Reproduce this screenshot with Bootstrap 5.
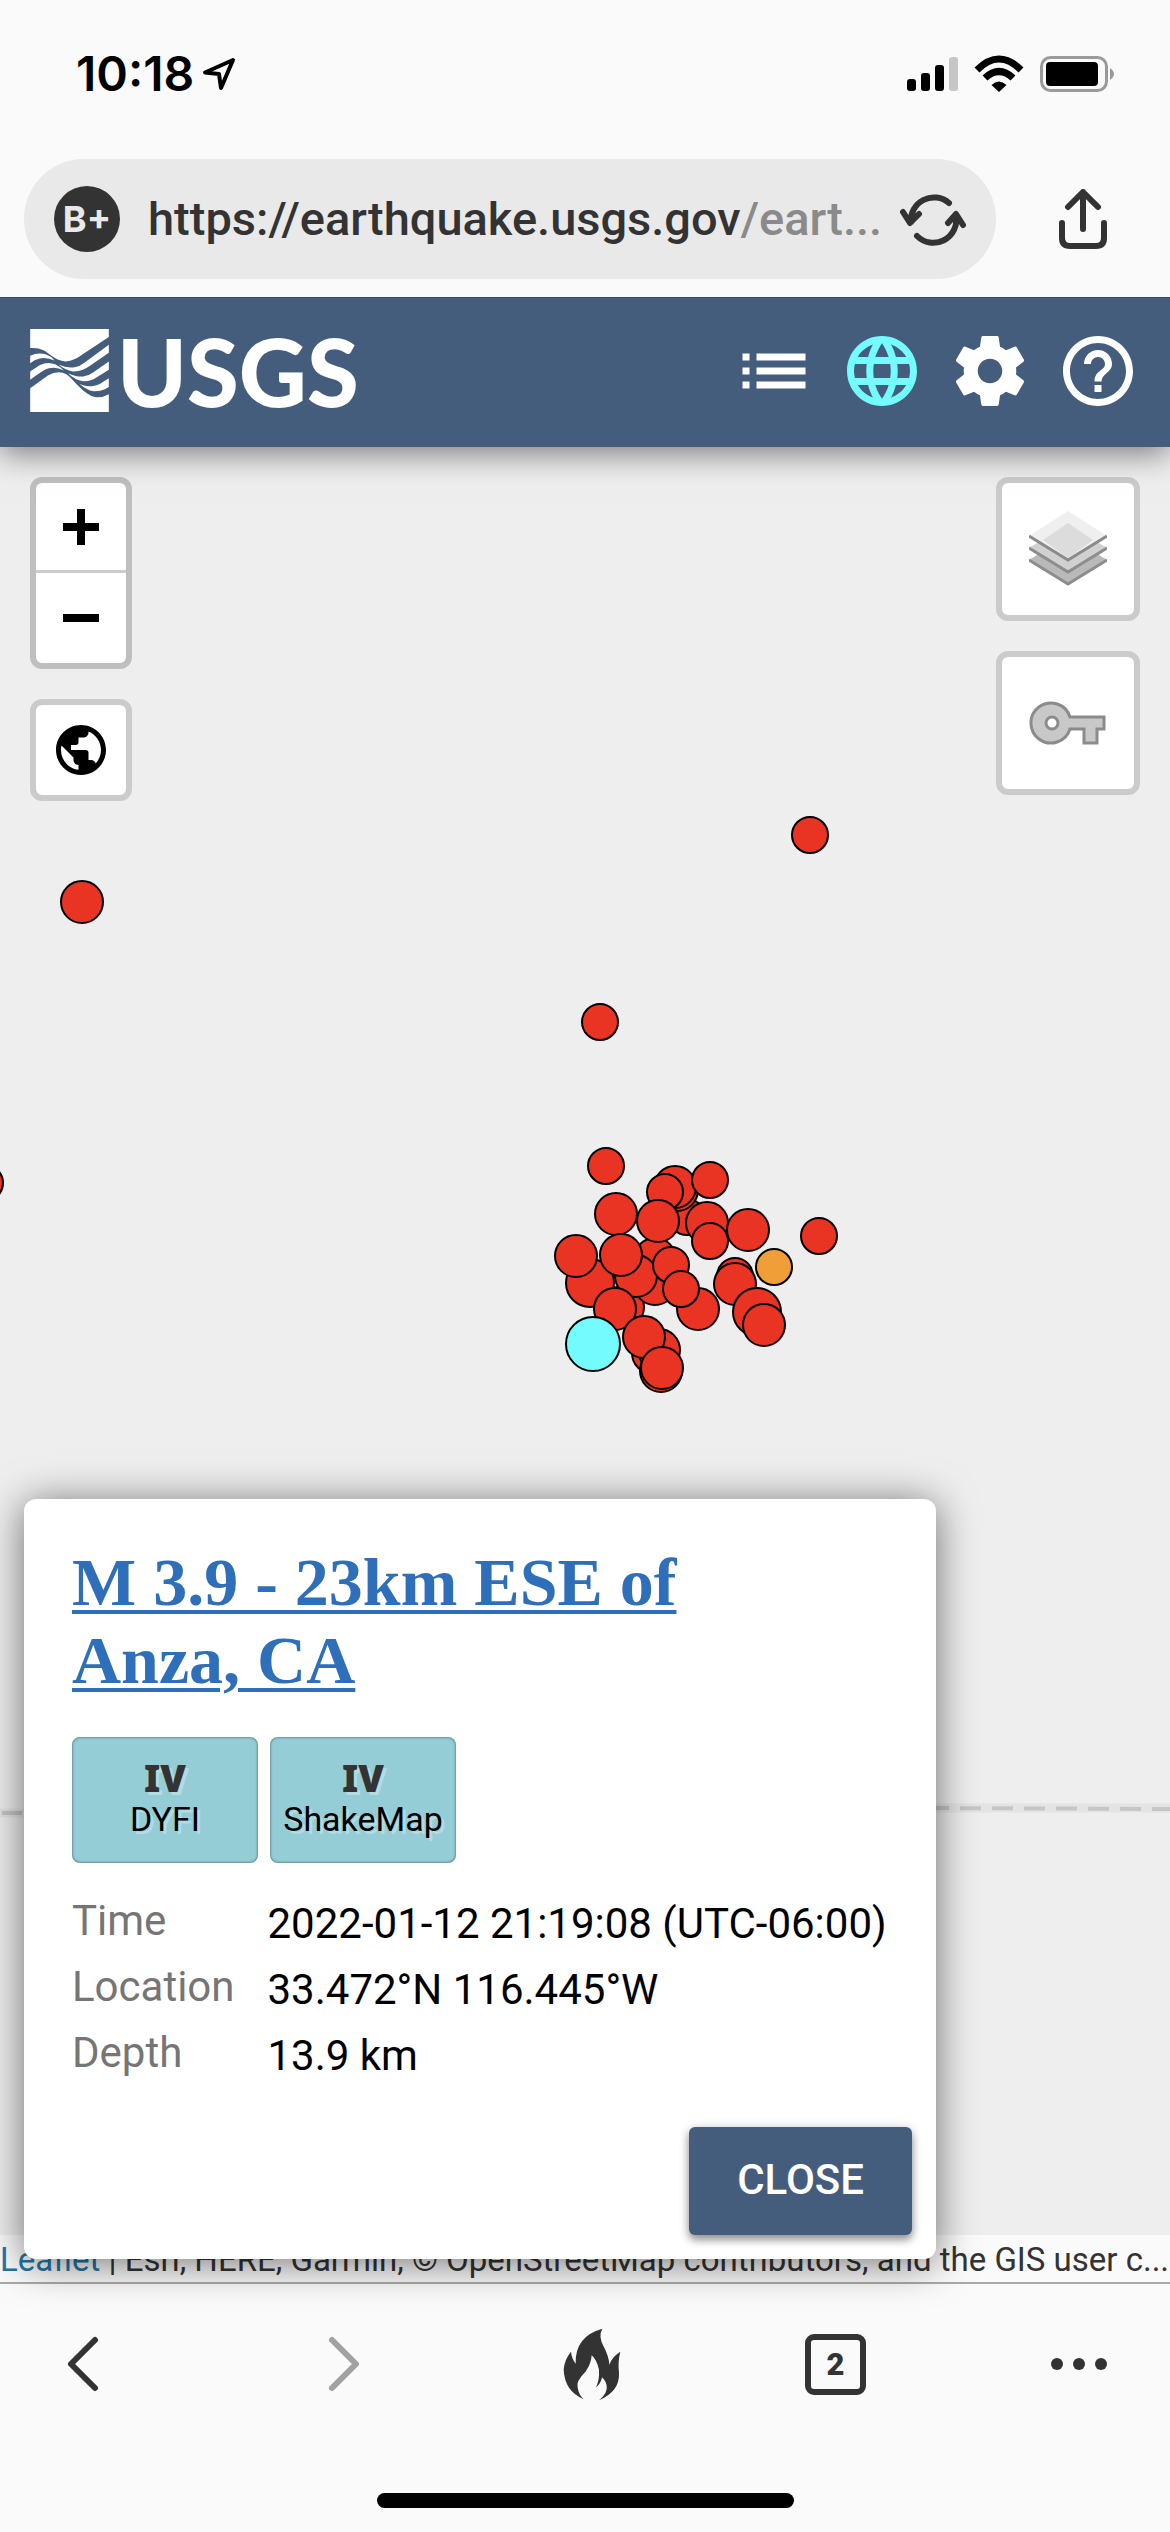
<!DOCTYPE html>
<html lang="en">
<head>
<meta charset="utf-8">
<meta name="viewport" content="width=device-width, initial-scale=1">
<title>USGS Latest Earthquakes</title>
<link href="https://cdn.jsdelivr.net/npm/bootstrap@5.3.0/dist/css/bootstrap.min.css" rel="stylesheet">
<style>
  body { background: #fafafa; color: #000; font-family: Roboto, sans-serif; }
  svg { display: block; flex: none; }
  button { background: none; border: 0; padding: 0; }

  /* phone status bar */
  .status-bar { height: 148px; padding: 0 54px 0 76px; }
  .clock { font: 600 48px/48px Inter, sans-serif; }

  /* address bar */
  .address-row { padding: 11px 62px 18px 24px; gap: 62px; background: #fafafa; z-index: 3; }
  .address-pill { height: 120px; background: #e9e9e9; padding: 0 30px; min-width: 0; }
  .grade { width: 66px; height: 66px; background: #333; color: #e9e9e9; font: 700 36px/66px Inter, sans-serif; }
  .url-text { font: 500 47px/60px Roboto, sans-serif; color: #333; margin: 0 0 0 28px; min-width: 0; }
  .url-text span { color: #8a8a8a; }

  /* site header */
  .site-header { height: 150px; background: #455d7c; border-top: 1px solid #3b4a66; padding: 0 30px 4px; box-shadow: 0 6px 30px rgba(0,0,0,.5); z-index: 2; }
  .wordmark { font: 900 94px/84px Lato, sans-serif; color: #fff; }
  .tools { gap: 24px; }
  .tools svg, .tools a { width: 84px; height: 84px; fill: #fff; }
  .tools .is-on svg { fill: #73fbfd; }

  /* map */
  .quake-map { background: #eee; padding: 30px 30px 0; }
  .markers { inset: 0; }
  .markers circle { fill: #e93323; stroke: #000; stroke-width: 2; }
  .stack { gap: 30px; }
  .map-ctl { border: 6px solid #cbcbcb; border-radius: 12px; background: #fff; overflow: hidden; }
  .zoom-ctl { border-color: #bfbfbf; }
  .map-ctl button { width: 90px; height: 90px; }
  .map-ctl.big button { width: 132px; height: 132px; }
  .zoom-ctl button:first-child { border-bottom: 3px solid #ccc; }
  .attribution { bottom: 0; left: 0; right: 0; height: 47px; background: rgba(255,255,255,.7); color: #333; font-size: 33px; line-height: 49px; }
  .attribution a { color: #2276a9; text-decoration: none; }

  /* event card */
  .event-card { left: 24px; bottom: 23px; width: 912px; max-width: calc(100% - 48px); background: #fff; border-radius: 12px; box-shadow: 0 4px 40px rgba(0,0,0,.55); padding: 44px 24px 24px; }
  .event-body { padding: 0 24px; }
  .event-title { font: 700 68px/78px "Liberation Serif", serif; max-width: 700px; margin: 0 0 38px; }
  .event-title a { color: #2f6eb9; text-decoration: underline 4px; text-underline-offset: 5px; }
  .intensity-list { gap: 12px; }
  .intensity { width: 186px; height: 126px; padding-bottom: 6px; border-radius: 8px; background: #95cdd7; box-shadow: inset 0 0 3px rgba(0,0,0,.6); color: #000; text-decoration: none; text-shadow: 3px 3px 0 rgba(255,255,255,.3); font-size: 34px; line-height: 38px; }
  .intensity b { font: 900 37px/44px "Noto Sans", sans-serif; color: #333; }
  .facts { display: grid; grid-template-columns: auto 1fr; column-gap: 33px; font-size: 42px; line-height: 66px; margin: 28px 0 38px; }
  .facts dt { font-weight: 400; color: #757575; line-height: 60px; }
  .facts dd { margin: 0; }
  .btn-close-card { height: 108px; padding: 0 48px 3px; border-radius: 6px; background: #455d7c; color: #fff; font-weight: 500; font-size: 42px; box-shadow: 0 5px 8px rgba(0,0,0,.4), 0 0 12px rgba(0,0,0,.12); }

  /* browser toolbar */
  .browser-bar { border-top: 2px solid #a9a9a9; height: 250px; }
  .row-of-buttons { height: 160px; padding: 0 51px 0 43px; }
  .row-of-buttons button { width: 80px; height: 80px; }
  .tab-count { font: 900 31px/1 Roboto, sans-serif; color: #333; border: 6px solid #333; border-radius: 9px; width: 61px; height: 61px; }
  .home-bar { width: 417px; height: 15px; margin-top: 49px; background: #000; }
</style>
</head>
<body class="min-vh-100 d-flex flex-column">

<div class="status-bar d-flex align-items-center">
  <span class="clock">10:18</span>
  <svg class="ms-2" width="34" height="34" viewBox="0 0 34 34" fill="none" stroke="#000" stroke-width="4" stroke-linejoin="round"><path d="M31 3L3 15.500 17 17 19 31Z"/></svg>
  <svg class="ms-auto" width="51" height="36" viewBox="0 0 51 36"><rect y="23" width="9" height="12" rx="3"/><rect x="14" y="17" width="9" height="18" rx="3"/><rect x="28" y="9" width="9" height="26" rx="3"/><rect x="42" y="1" width="9" height="34" rx="3" fill="#c6c6c6"/></svg>
  <svg class="mx-3" width="50" height="38" viewBox="0 0 50 38"><path fill="none" stroke="#000" stroke-width="7" d="M3 15Q25 -7 47 15M11 23Q25 10 39 23"/><path d="M25 37L17.500 30Q25 23 32.500 30Z"/></svg>
  <svg width="76" height="38" viewBox="0 0 76 38"><rect x="1.500" y="2.500" width="65" height="33" rx="9" fill="none" stroke="#9a9a9a" stroke-width="3"/><rect x="6" y="7" width="52" height="24" rx="4"/><path d="M70 13Q78 19 70 25Z" fill="#9a9a9a"/></svg>
</div>

<div class="address-row d-flex align-items-center position-relative">
  <div class="address-pill rounded-pill d-flex align-items-center flex-grow-1">
    <span class="grade rounded-circle text-center flex-shrink-0">B+</span>
    <div class="url-text text-truncate flex-grow-1">https://earthquake.usgs.gov<span>/eart...</span></div>
    <button type="button" aria-label="Reload"><svg width="66" height="60" viewBox="0 0 66 60" fill="none" stroke="#333" stroke-width="6" stroke-linecap="round" stroke-linejoin="round"><path d="M11 33A23 23 0 0 1 49 14M3 23l7 11 9-9M56 27A23 23 0 0 1 17 47M48 34l8-9 7 11"/></svg></button>
  </div>
  <button type="button" aria-label="Share"><svg width="50" height="60" viewBox="0 0 50 60" fill="none" stroke="#333" stroke-width="6" stroke-linecap="round" stroke-linejoin="round"><path d="M4 34V49Q4 57 12 57H38Q46 57 46 49V34M25 40V4M10 18L25 3 40 18"/></svg></button>
</div>

<header class="site-header d-flex align-items-center position-relative">
  <a href="#" class="d-flex align-items-center text-decoration-none me-auto" aria-label="USGS home">
    <svg class="me-2" width="79" height="83" viewBox="32 33 235 248" fill="#fff"><path d="M32 33H267V57L190 108Q165 128 138 130C105 128 90 105 70 96Q55 88 32 90Z"/><path d="M32 210L85 172Q115 155 140 168C165 185 190 230 230 237Q250 238 267 228V281H32Z"/><path d="M32 113Q55 102 80 109Q95 114 105 127Q80 116 60 121Q45 125 32 135Z"/><path d="M32 160L60 141Q85 129 108 139Q122 146 133 157Q110 145 85 151Q70 156 32 185Z"/><path d="M267 80V104L215 140Q185 162 160 160Q135 156 118 140Q140 150 165 147Q180 145 195 133Z"/><path d="M267 130V155L230 178Q210 191 190 189Q165 185 145 165Q170 177 190 175Q205 174 220 163Z"/><path d="M267 180V206L255 213Q240 220 222 219Q200 215 180 197Q200 206 220 203Q230 202 240 197Z"/></svg>
    <span class="wordmark">USGS</span>
  </a>
  <nav class="tools d-flex" aria-label="Views">
    <a href="#" aria-label="List"><svg viewBox="0 0 24 24"><path d="M3 13h2v-2H3v2zm0 4h2v-2H3v2zm0-8h2V7H3v2zm4 4h14v-2H7v2zm0 4h14v-2H7v2zM7 7v2h14V7H7z"/></svg></a>
    <a href="#" class="is-on" aria-label="Map"><svg viewBox="0 0 24 24"><path d="M11.990 2C6.470 2 2 6.480 2 12s4.470 10 9.990 10C17.520 22 22 17.520 22 12S17.520 2 11.990 2zm6.930 6h-2.950c-.32-1.250-.78-2.450-1.380-3.560 1.840.63 3.370 1.910 4.330 3.560zM12 4.040c.83 1.200 1.480 2.530 1.910 3.960h-3.820c.43-1.430 1.080-2.760 1.910-3.960zM4.260 14C4.100 13.360 4 12.690 4 12s.1-1.360.26-2h3.380c-.08.66-.14 1.320-.14 2 0 .68.06 1.340.14 2H4.260zm.82 2h2.950c.32 1.250.78 2.450 1.380 3.560-1.840-.63-3.370-1.900-4.330-3.560zm2.950-8H5.080c.96-1.660 2.490-2.930 4.330-3.560C8.810 5.550 8.350 6.750 8.030 8zM12 19.960c-.83-1.200-1.480-2.530-1.910-3.960h3.820c-.43 1.430-1.080 2.760-1.910 3.960zM14.340 14H9.660c-.09-.66-.16-1.320-.16-2 0-.68.07-1.350.16-2h4.680c.09.65.16 1.320.16 2 0 .68-.07 1.340-.16 2zm.25 5.560c.6-1.110 1.060-2.310 1.380-3.560h2.950c-.96 1.650-2.490 2.930-4.330 3.560zM16.360 14c.08-.66.14-1.320.14-2 0-.68-.06-1.340-.14-2h3.380c.16.64.26 1.310.26 2s-.1 1.360-.26 2h-3.380z"/></svg></a>
    <a href="#" aria-label="Settings"><svg viewBox="0 0 24 24"><path d="M19.430 12.980c.04-.32.07-.64.07-.98s-.03-.66-.07-.98l2.110-1.650c.19-.15.24-.42.12-.64l-2-3.460c-.12-.22-.39-.3-.61-.22l-2.490 1c-.52-.4-1.080-.73-1.690-.98l-.38-2.650C14.460 2.180 14.250 2 14 2h-4c-.25 0-.46.18-.49.42l-.38 2.650c-.61.25-1.170.59-1.690.98l-2.490-1c-.23-.09-.49 0-.61.22l-2 3.460c-.13.22-.07.49.12.64l2.110 1.650c-.04.32-.07.65-.07.98s.03.66.07.98l-2.110 1.650c-.19.15-.24.42-.12.64l2 3.460c.12.22.39.3.61.22l2.490-1c.52.4 1.080.73 1.690.98l.38 2.650c.03.24.24.42.49.42h4c.25 0 .46-.18.49-.42l.38-2.650c.61-.25 1.170-.59 1.690-.98l2.490 1c.23.09.49 0 .61-.22l2-3.460c.12-.22.07-.49-.12-.64l-2.110-1.650zM12 15.500c-1.930 0-3.500-1.570-3.500-3.500s1.570-3.500 3.500-3.500 3.500 1.570 3.500 3.500-1.570 3.500-3.500 3.500z"/></svg></a>
    <a href="#" aria-label="Help"><svg viewBox="0 0 24 24"><path d="M11 18h2v-2h-2v2zm1-16C6.480 2 2 6.480 2 12s4.480 10 10 10 10-4.480 10-10S17.520 2 12 2zm0 18c-4.410 0-8-3.590-8-8s3.590-8 8-8 8 3.590 8 8-3.590 8-8 8zm0-14c-2.210 0-4 1.790-4 4h2c0-1.100.9-2 2-2s2 .9 2 2c0 2-3 1.750-3 5h2c0-2.250 3-2.500 3-5 0-2.210-1.790-4-4-4z"/></svg></a>
  </nav>
</header>

<main class="quake-map position-relative flex-grow-1 d-flex justify-content-between align-items-start">
  <svg class="markers position-absolute w-100 h-100" role="img" aria-label="Earthquake locations">
    <g fill="none" stroke="#e4e4e4" stroke-width="9"><path d="M936 1361H1170M0 1366H30"/></g>
    <g fill="none" stroke="#c6c6c6" stroke-width="4"><path d="M928 1361L1170 1362" stroke-dasharray="21 11"/><path d="M2 1366H22"/></g>
    <g>
      <circle cx="-15" cy="736" r="18"/><circle cx="82" cy="455" r="21"/><circle cx="810" cy="388" r="18"/><circle cx="600" cy="575" r="18"/>
      <circle cx="606" cy="719" r="18"/><circle cx="819" cy="789" r="18"/>
      <circle cx="590" cy="836" r="24"/><circle cx="623" cy="860" r="21"/><circle cx="655" cy="812" r="21"/><circle cx="655" cy="837" r="21"/>
      <circle cx="636" cy="829" r="21"/><circle cx="698" cy="862" r="21"/><circle cx="671" cy="818" r="18"/><circle cx="681" cy="842" r="18"/>
      <circle cx="616" cy="767" r="21"/><circle cx="576" cy="809" r="21"/><circle cx="621" cy="808" r="21"/><circle cx="615" cy="862" r="21"/>
      <circle cx="687" cy="770" r="18"/><circle cx="677" cy="743" r="21"/><circle cx="675" cy="740" r="21"/><circle cx="665" cy="745" r="18"/>
      <circle cx="710" cy="733" r="18"/><circle cx="707" cy="776" r="21"/><circle cx="710" cy="794" r="18"/><circle cx="658" cy="774" r="21"/>
      <circle cx="748" cy="783" r="21"/><circle cx="774" cy="820" r="18" style="fill:#f09f38"/>
      <circle cx="735" cy="829" r="18"/><circle cx="735" cy="837" r="21"/><circle cx="757" cy="865" r="24"/><circle cx="764" cy="878" r="21"/>
      <circle cx="653" cy="906" r="21"/><circle cx="659" cy="903" r="21"/><circle cx="644" cy="890" r="21"/><circle cx="661" cy="924" r="21"/><circle cx="662" cy="921" r="21"/>
      <circle cx="593" cy="897" r="27" style="fill:#73fbfd"/>
    </g>
  </svg>

  <div class="stack d-flex flex-column position-relative">
    <div class="map-ctl zoom-ctl d-flex flex-column">
      <button type="button" aria-label="Zoom in"><svg class="mx-auto" width="36" height="36" viewBox="0 0 36 36"><path d="M14 0h8v14h14v8H22v14h-8V22H0v-8h14z"/></svg></button>
      <button type="button" aria-label="Zoom out"><svg class="mx-auto" width="36" height="36" viewBox="0 0 36 36"><path d="M0 14h36v8H0z"/></svg></button>
    </div>
    <div class="map-ctl d-flex">
      <button type="button" aria-label="Zoom to world"><svg class="mx-auto" width="60" height="60" viewBox="0 0 24 24"><path d="M12 2C6.480 2 2 6.480 2 12s4.480 10 10 10 10-4.480 10-10S17.520 2 12 2zm-1 17.930c-3.950-.49-7-3.850-7-7.930 0-.62.08-1.210.21-1.790L9 15v1c0 1.100.9 2 2 2v1.930zm6.900-2.540c-.26-.81-1-1.390-1.900-1.390h-1v-3c0-.55-.45-1-1-1H8v-2h2c.55 0 1-.45 1-1V7h2c1.100 0 2-.9 2-2v-.41c2.930 1.190 5 4.060 5 7.410 0 2.080-.8 3.970-2.100 5.390z"/></svg></button>
    </div>
  </div>

  <div class="stack d-flex flex-column position-relative">
    <div class="map-ctl big d-flex">
      <button type="button" aria-label="Layers"><svg class="mx-auto" width="78" height="78" viewBox="0 0 78 78"><path d="M0 50L39 26 78 50 39 75Z" fill="#b9b9b9"/><path d="M0 50L39 74 78 50" fill="none" stroke="#8d8d8d" stroke-width="3"/><path d="M0 38L39 14 78 38 39 63Z" fill="#d0d0d0"/><path d="M0 38L39 62 78 38" fill="none" stroke="#8d8d8d" stroke-width="3"/><path d="M0 26L39 1 78 26 39 51Z" fill="#efefef"/><path d="M14 30L39 13 64 30 39 48Z" fill="#dcdcdc"/><path d="M0 26L39 50 78 26" fill="none" stroke="#8a8a8a" stroke-width="3"/></svg></button>
    </div>
    <div class="map-ctl big d-flex">
      <button type="button" aria-label="Legend"><svg class="mx-auto" width="78" height="44" viewBox="0 0 78 44" fill="#c8c8c8" stroke="#8b8b8b" stroke-width="3"><path d="M41 16A20 20 0 1 0 41 28H55V42H68V28H75V16Z"/><circle cx="23" cy="22" r="6" fill="#fff"/></svg></button>
    </div>
  </div>

  <footer class="attribution position-absolute text-truncate"><a href="#">Leaflet</a> | Esri, HERE, Garmin, © OpenStreetMap contributors, and the GIS user c...</footer>

  <section class="event-card position-absolute">
    <div class="event-body">
      <h1 class="event-title"><a href="#">M 3.9 - 23km ESE of Anza, CA</a></h1>
      <div class="intensity-list d-flex">
        <a href="#" class="intensity d-flex flex-column align-items-center justify-content-center"><b>IV</b>DYFI</a>
        <a href="#" class="intensity d-flex flex-column align-items-center justify-content-center"><b>IV</b>ShakeMap</a>
      </div>
      <dl class="facts">
        <dt>Time</dt><dd>2022-01-12 21:19:08 (UTC-06:00)</dd>
        <dt>Location</dt><dd>33.472°N 116.445°W</dd>
        <dt>Depth</dt><dd>13.9 km</dd>
      </dl>
    </div>
    <div class="d-flex justify-content-end"><button type="button" class="btn-close-card">CLOSE</button></div>
  </section>
</main>

<div class="browser-bar">
  <div class="row-of-buttons d-flex align-items-center justify-content-between">
    <button type="button" class="d-flex align-items-center justify-content-center" aria-label="Back"><svg width="48" height="60" viewBox="0 0 48 60" fill="none" stroke="#333" stroke-width="6" stroke-linecap="round" stroke-linejoin="round"><path d="M36 6L12 30 36 54"/></svg></button>
    <button type="button" class="d-flex align-items-center justify-content-end" aria-label="Forward"><svg class="me-1" width="48" height="60" viewBox="0 0 48 60" fill="none" stroke="#a2a2a2" stroke-width="6" stroke-linecap="round" stroke-linejoin="round"><path d="M12 6L36 30 12 54"/></svg></button>
    <button type="button" class="d-flex align-items-center justify-content-end" aria-label="Clear data"><svg width="58" height="73" viewBox="70 50 174 218" fill="#333"><path d="M188 52Q175 75 192 105Q208 135 209 160Q218 135 242 121Q234 150 238 185Q240 240 178 266Q205 245 201 222Q197 205 187 198Q184 215 169 228Q180 205 178 175Q172 145 156 131Q155 155 138 180Q108 210 114 228Q117 250 132 263Q75 240 72 175Q74 145 94 121Q96 142 108 157Q105 75 188 52Z"/></svg></button>
    <button type="button" class="d-flex align-items-center justify-content-end" aria-label="Tabs"><span class="tab-count me-1 d-flex align-items-center justify-content-center">2</span></button>
    <button type="button" class="d-flex align-items-center justify-content-center" aria-label="More"><svg width="56" height="14" viewBox="0 0 56 14" fill="#333"><circle cx="6" cy="7" r="6"/><circle cx="28" cy="7" r="6"/><circle cx="50" cy="7" r="6"/></svg></button>
  </div>
  <div class="home-bar rounded-pill mx-auto"></div>
</div>

<script src="https://cdn.jsdelivr.net/npm/bootstrap@5.3.0/dist/js/bootstrap.bundle.min.js"></script>
</body>
</html>
